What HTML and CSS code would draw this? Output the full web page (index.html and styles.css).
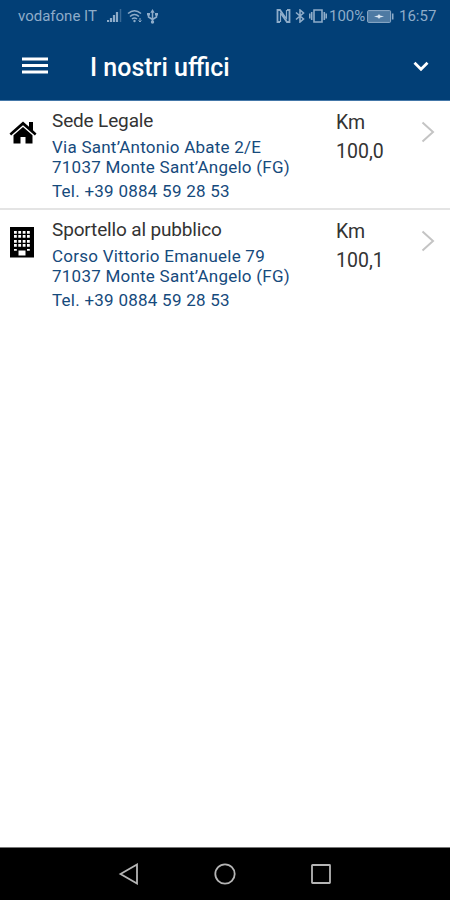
FILE: index.html
```
<!DOCTYPE html>
<html lang="it">
<head>
    <meta charset="UTF-8">
    <meta name="viewport" content="width=device-width, initial-scale=1.0">
    <title>I nostri uffici</title>
    <link rel="stylesheet" href="styles.css">
</head>
<body>
    <header class="top">
        <div class="status-bar">
            <span class="carrier">vodafone IT</span>
            <svg class="signal" width="15" height="14" viewBox="0 0 15 14">
                <path d="M1 13v-2M4 13V9M7 13V6M10 13V3" stroke="currentColor" stroke-width="2.2"/>
                <path d="M13.500 13V0" stroke="currentColor" stroke-width="1.5" opacity=".4"/>
            </svg>
            <svg class="wifi" width="16" height="14" viewBox="0 0 16 14" fill="none" stroke="currentColor" stroke-width="1.6">
                <path d="M1 4.500Q7.500-1 14 4.500M3 7.500Q7.500 3.500 12 7.500M5 10Q7.500 8 10 10"/>
                <circle cx="7.500" cy="12" r="1.200" fill="currentColor" stroke="none"/>
                <path d="M13 9v4M11.500 11.500 13 13l1.500-1.500" stroke-width="1"/>
            </svg>
            <svg class="usb" width="11" height="15" viewBox="0 0 11 15" fill="none" stroke="currentColor" stroke-width="1.500">
                <path d="M5.500 2v11M1.500 5v3l4 2.500L9.500 8V5"/>
                <path d="M3.300 3.700 5.500 0l2.200 3.700zM0 4h3v2.500H0zM8 4h3v2.500H8z" fill="currentColor" stroke="none"/>
                <circle cx="5.500" cy="13" r="1.700" fill="currentColor" stroke="none"/>
            </svg>
            <svg class="nfc" width="15" height="14" viewBox="0 0 15 14" fill="none" stroke="currentColor" stroke-width="1.800">
                <path d="M4 13H1.500V1H4l6 8.500M11 1h2.500v12H11L5 4.500"/>
                <path d="M4.500 3.500V13M10.500 1v9.500" stroke-width="1.200"/>
            </svg>
            <svg class="bluetooth" width="10" height="14" viewBox="0 0 10 14" fill="none" stroke="currentColor" stroke-width="1.600">
                <path d="M1 3.500 8.500 10 5 13V1l3.500 3L1 10.500"/>
            </svg>
            <svg class="vibrate" width="18" height="14" viewBox="0 0 18 14" fill="none" stroke="currentColor" stroke-width="1.600">
                <path d="M5 1h8v12H5zM2.700 3v8M15.300 3v8M.7 4.500v5M17.300 4.500v5"/>
            </svg>
            <span class="percent">100%</span>
            <svg class="battery" width="27" height="13" viewBox="0 0 27 13">
                <rect x=".6" y=".6" width="23" height="11.800" rx="1" fill="currentColor" fill-opacity=".55" stroke="currentColor"/>
                <path d="M25.700 3.500v6" stroke="currentColor" stroke-width="1.600"/>
                <path d="M7 6.500l4-1 1-1.500 1 1.500 4 1-4 1-1 1.500-1-1.500z" fill="#dce8f3"/>
            </svg>
            <span class="clock">16:57</span>
        </div>
        <div class="toolbar">
            <svg class="menu" width="26" height="18" viewBox="0 0 26 18">
                <path d="M0 2h26M0 8.500h26M0 15h26" stroke="currentColor" stroke-width="2.800"/>
            </svg>
            <h1>I nostri uffici</h1>
            <svg class="expand" width="16" height="11" viewBox="0 0 16 11">
                <path d="M1.500 1.700 8 8.200l6.500-6.500" fill="none" stroke="currentColor" stroke-width="2.800"/>
            </svg>
        </div>
    </header>

    <main class="offices">
        <div class="office">
            <svg class="office-icon" width="28" height="34" viewBox="0 0 28 34">
                <path d="M14 4.500 .5 16.500l1.600 2L14 8.200l11.900 10.300 1.600-2-3.500-3.200V5h-4v4.800z"/>
                <path d="M14 10 4.500 18.200V26.500h7V20h5v6.500h7v-8.300z"/>
            </svg>
            <div class="info">
                <h2>Sede Legale</h2>
                <p class="address">Via Sant’Antonio Abate 2/E<br>71037 Monte Sant’Angelo (FG)</p>
                <p class="phone">Tel. +39 0884 59 28 53</p>
            </div>
            <div class="distance">Km<br>100,0</div>
            <svg class="arrow" width="14" height="22" viewBox="0 0 14 22">
                <path d="M1.500 1.500 12 11 1.500 20.500" fill="none" stroke="currentColor" stroke-width="2"/>
            </svg>
        </div>
        <div class="office">
            <svg class="office-icon" width="28" height="34" viewBox="0 0 28 34">
                <path d="M1 1h24v30.500H1z"/>
                <path d="M5 5h2.800v2.800H5zM9.300 5h2.800v2.800H9.300zM13.700 5h2.800v2.800h-2.800zM18 5h2.800v2.800H18zM5 9h2.800v2.800H5zM9.300 9h2.800v2.800H9.300zM13.700 9h2.800v2.800h-2.800zM18 9h2.800v2.800H18zM5 14h2.800v2.800H5zM9.300 14h2.800v2.800H9.300zM13.700 14h2.800v2.800h-2.800zM18 14h2.800v2.800H18zM5 18h2.800v2.800H5zM9.300 18h2.800v2.800H9.300zM13.700 18h2.800v2.800h-2.800zM18 18h2.800v2.800H18zM5 23h2.800v1.800H5zM18 23h2.800v1.800H18zM9.500 24.500h7v5h-7z" fill="#fff"/>
            </svg>
            <div class="info">
                <h2>Sportello al pubblico</h2>
                <p class="address">Corso Vittorio Emanuele 79<br>71037 Monte Sant’Angelo (FG)</p>
                <p class="phone">Tel. +39 0884 59 28 53</p>
            </div>
            <div class="distance">Km<br>100,1</div>
            <svg class="arrow" width="14" height="22" viewBox="0 0 14 22">
                <path d="M1.500 1.500 12 11 1.500 20.500" fill="none" stroke="currentColor" stroke-width="2"/>
            </svg>
        </div>
    </main>

    <nav class="nav-bar">
        <svg width="22" height="22" viewBox="0 0 22 22">
            <path d="M2.500 11 19 1.500v19z"/>
        </svg>
        <svg width="22" height="22" viewBox="0 0 22 22">
            <circle cx="11" cy="11" r="9.700"/>
        </svg>
        <svg width="22" height="22" viewBox="0 0 22 22">
            <rect x="2" y="2" width="18" height="18" rx=".5"/>
        </svg>
    </nav>
</body>
</html>
```

FILE: styles.css
```
* {
    box-sizing: border-box;
}

body {
    margin: 0;
    height: 100vh;
    display: flex;
    flex-direction: column;
    overflow: hidden;
    font-family: Roboto, sans-serif;
    background: #fff;
    color: #222;
}

h1, h2, p {
    margin: 0;
}

svg {
    flex-shrink: 0;
}

.top {
    height: 101px;
    background: #023f76;
    border-bottom: 1px solid #4477a8;
    color: #fff;
}

.status-bar {
    height: 32px;
    padding: 0 14px 0 18px;
    display: flex;
    align-items: center;
    font-size: 15px;
    color: #8eacc9;
}

.carrier {
    width: 89px;
}

.wifi {
    margin-left: 5px;
}

.usb {
    margin-left: 4px;
}

.nfc {
    margin-left: auto;
}

.bluetooth {
    margin-left: 4px;
}

.vibrate {
    margin-left: 4px;
}

.percent {
    width: 38px;
    margin-left: 2px;
}

.clock {
    width: 37px;
    margin-left: 5px;
}

.toolbar {
    height: 68px;
    padding: 0 21px 0 22px;
    display: flex;
    align-items: center;
}

.toolbar h1 {
    flex: 1;
    margin-left: 42px;
    padding-top: 2px;
    font-size: 25px;
    font-weight: 500;
}

.offices {
    flex: 1;
}

.office {
    height: 109px;
    padding: 7px 15px 0 9px;
    display: flex;
    align-items: flex-start;
    border-bottom: 2px solid #e4e4e4;
}

.office:last-child {
    border-bottom: none;
}

.office-icon {
    margin-top: 9px;
}

.info {
    width: 284px;
    padding: 1px 0 0 15px;
    color: #164a7c;
}

.info h2 {
    font-size: 19px;
    line-height: 24px;
    font-weight: 400;
    letter-spacing: -0.15px;
    color: #333;
}

.address {
    margin-top: 4px;
    font-size: 17px;
    line-height: 20px;
    letter-spacing: 0.24px;
}

.phone {
    margin-top: 4px;
    font-size: 17px;
    line-height: 21px;
    letter-spacing: 0.25px;
}

.distance {
    padding-left: 15px;
    font-size: 19.5px;
    line-height: 29px;
    color: #333;
}

.arrow {
    margin: 13px 0 0 auto;
    color: #c4c4c4;
}

.nav-bar {
    height: 53px;
    display: flex;
    justify-content: center;
    align-items: center;
    gap: 74px;
    background: #000;
    border-top: 1px solid #777;
}

.nav-bar svg {
    fill: none;
    stroke: #b5b5b5;
    stroke-width: 1.8;
}
```
